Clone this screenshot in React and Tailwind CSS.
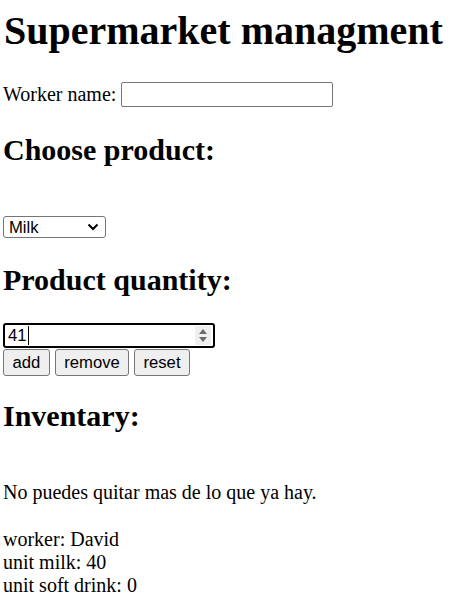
import React from 'react';

function Spinner() {
  return (
    <div className="ml-auto mr-[2px] flex h-[19px] w-[16px] items-center justify-center bg-[#efefef]">
      <svg width="10" height="15" viewBox="0 0 10 15">
        <path d="M5 1 L9 6 L1 6 Z" fill="#6b6b6b" />
        <path d="M1 9 L9 9 L5 14 Z" fill="#6b6b6b" />
      </svg>
    </div>
  );
}

function Btn({ label, width }) {
  return (
    <button
      className={`${width} h-[27px] rounded-[3px] border border-[#767676] bg-[#efefef] text-center font-['Liberation_Sans',Arial,sans-serif] text-[16.67px] leading-[25px] text-black`}
    >
      {label}
    </button>
  );
}

export default function App() {
  return (
    <div className="min-h-screen bg-white px-[3px] font-['Liberation_Serif','Times_New_Roman',serif] text-[20px] leading-[23px] text-black">
      <h1 className="pt-[8px] text-[40px] font-bold leading-[46px] pl-[1px]">Supermarket managment</h1>

      <div className="mt-[28px] flex h-[25px] items-center">
        <span>Worker name:</span>
        <input
          type="text"
          className="ml-[5px] h-[25px] w-[212px] rounded-[2px] border border-[#767676] bg-white px-[3px] outline-none"
        />
      </div>

      <h2 className="mt-[25px] text-[30px] font-bold leading-[35px]">Choose product:</h2>

      <div className="mt-[49px] flex h-[22px] w-[103px] items-center justify-between rounded-[3px] border border-[#767676] bg-white pl-[5px] pr-[6px] font-['Liberation_Sans',Arial,sans-serif] text-[16.67px]">
        <span>Milk</span>
        <svg width="12" height="8" viewBox="0 0 12 8">
          <path d="M1.5 1.5 L6 6 L10.5 1.5" fill="none" stroke="#000" strokeWidth="2" />
        </svg>
      </div>

      <h2 className="mt-[24px] text-[30px] font-bold leading-[35px]">Product quantity:</h2>

      <div className="mt-[26px] flex h-[25px] w-[212px] items-center rounded-[3px] border-2 border-black bg-white pl-[3px] font-['Liberation_Sans',Arial,sans-serif] text-[16.67px]">
        <span>41</span>
        <span className="ml-[1px] h-[19px] w-[1px] bg-black" />
        <Spinner />
      </div>

      <div className="mt-[1px] flex gap-[5px]">
        <Btn label="add" width="w-[47px]" />
        <Btn label="remove" width="w-[74px]" />
        <Btn label="reset" width="w-[56px]" />
      </div>

      <h2 className="mt-[22px] text-[30px] font-bold leading-[35px]">Inventary:</h2>

      <p className="mt-[48px]">No puedes quitar mas de lo que ya hay.</p>

      <div className="mt-[24px]">
        <p>worker: David</p>
        <p>unit milk: 40</p>
        <p>unit soft drink: 0</p>
      </div>
    </div>
  );
}
